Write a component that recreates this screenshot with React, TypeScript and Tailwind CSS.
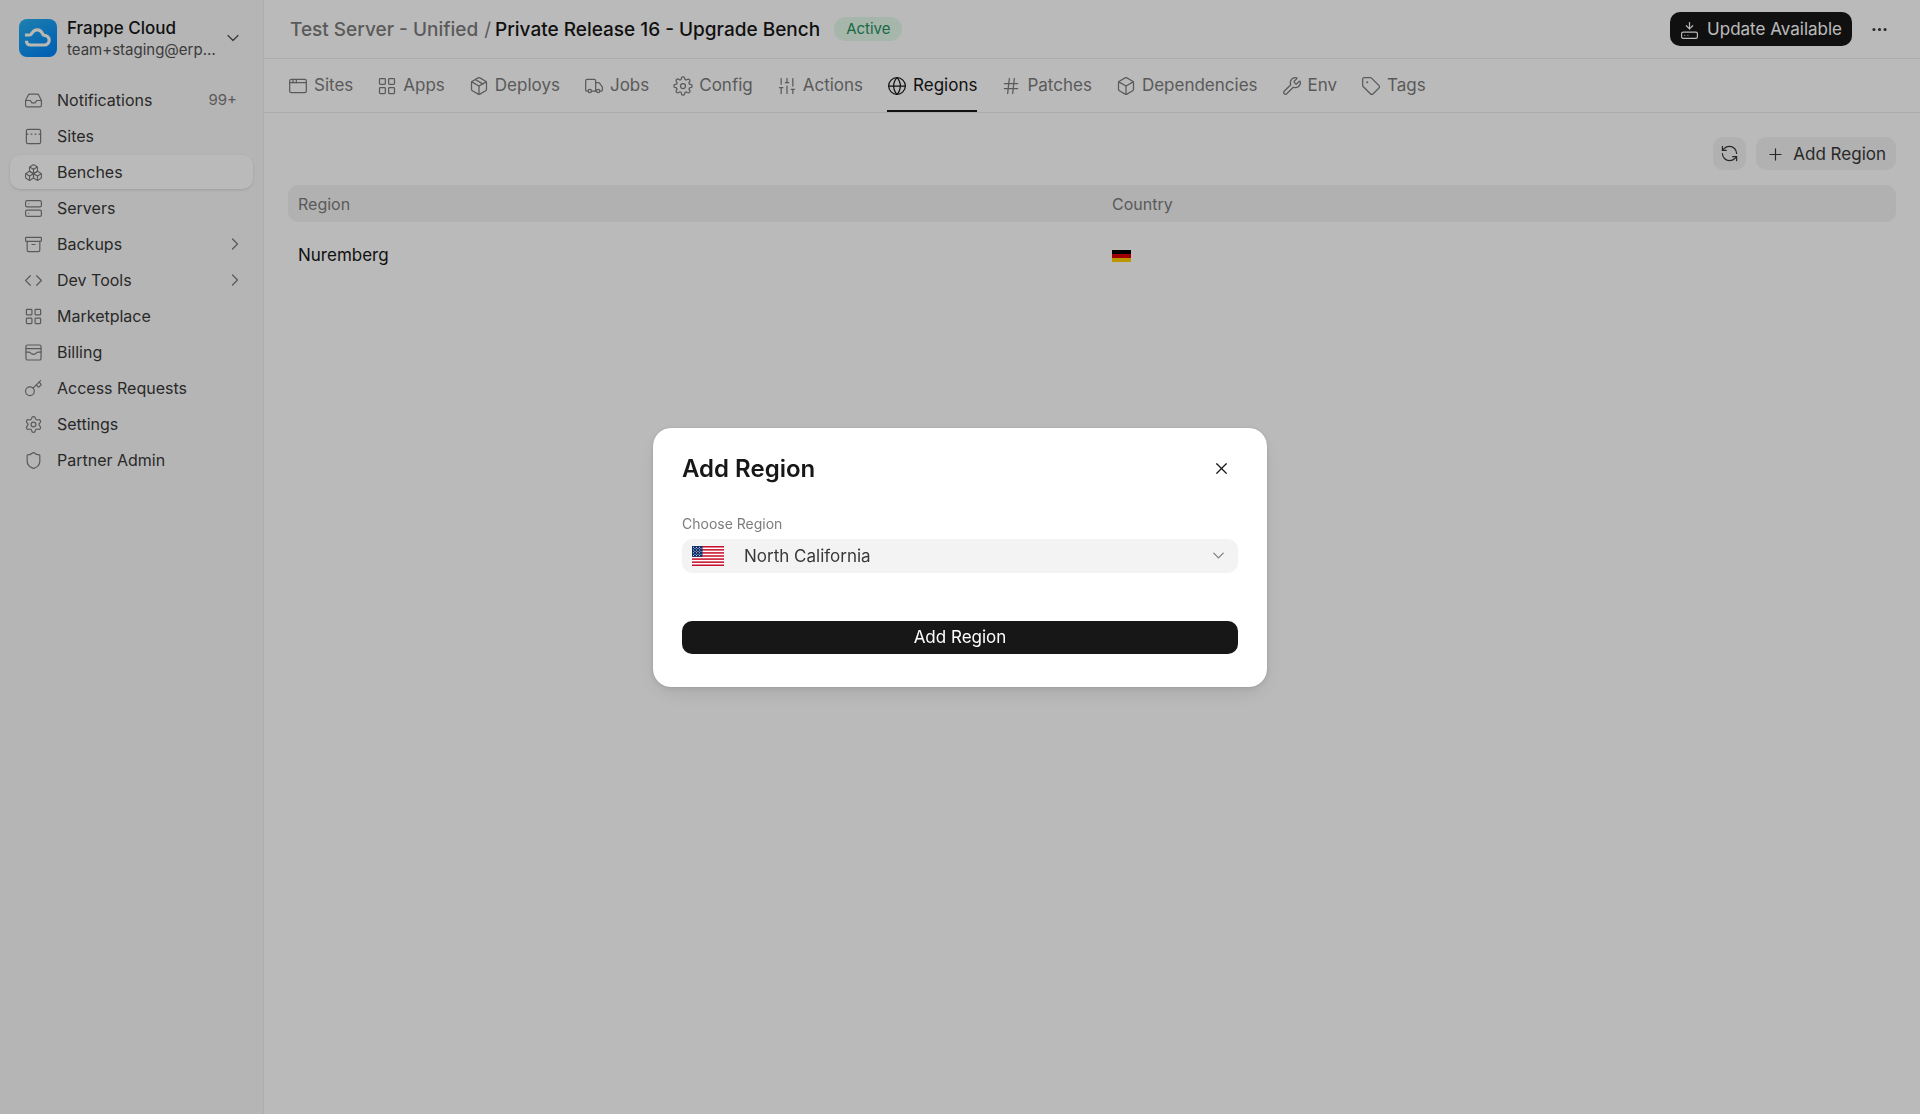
import { useState, type ComponentType } from "react";
import {
  AppWindow,
  Archive,
  Box,
  Boxes,
  ChevronDown,
  ChevronRight,
  Code,
  Ellipsis,
  Globe,
  HardDriveDownload,
  Hash,
  Inbox,
  Key,
  LayoutGrid,
  Package,
  PanelTopDashed,
  Plus,
  RefreshCcw,
  Server,
  Settings,
  Shield,
  SlidersVertical,
  Tag,
  Truck,
  Wrench,
  X,
} from "lucide-react";

interface IconProps {
  className?: string;
  strokeWidth?: number | string;
}

type Icon = ComponentType<IconProps>;

interface NavItem {
  label: string;
  icon: Icon;
  badge?: string;
  expandable?: boolean;
}

interface Tab {
  label: string;
  icon: Icon;
}

// wallet card with the flap across the middle
function BillingIcon({ className, strokeWidth }: IconProps) {
  return (
    <svg viewBox="0 0 24 24" className={className} fill="none" stroke="currentColor" strokeWidth={strokeWidth} strokeLinecap="round" strokeLinejoin="round">
      <rect width="19" height="19" x="2.5" y="2.5" rx="2" />
      <path d="M2.5 7h19" />
      <path d="M2.5 11.5H6c.9 0 1.7.4 2.3 1l.9.8c1.6 1.3 4 1.3 5.6 0l.9-.8c.6-.6 1.4-1 2.3-1h3.5" />
    </svg>
  );
}

// eight-lobed gear
function GearIcon({ className, strokeWidth }: IconProps) {
  return (
    <svg viewBox="0 0 24 24" className={className} fill="none" stroke="currentColor" strokeWidth={strokeWidth} strokeLinecap="round" strokeLinejoin="round">
      <circle cx="12" cy="12" r="3" />
      <path d="M19.4 15a1.65 1.65 0 0 0 .33 1.82l.06.06a2 2 0 1 1-2.83 2.83l-.06-.06a1.65 1.65 0 0 0-2.82 1.17V21a2 2 0 0 1-4 0v-.09a1.65 1.65 0 0 0-2.9-1.26l-.06.06a2 2 0 1 1-2.83-2.83l.06-.06A1.65 1.65 0 0 0 3.09 14H3a2 2 0 0 1 0-4h.09a1.65 1.65 0 0 0 1.26-2.9l-.06-.06a2 2 0 1 1 2.83-2.83l.06.06A1.65 1.65 0 0 0 10 3.09V3a2 2 0 0 1 4 0v.09a1.65 1.65 0 0 0 2.82 1.18l.06-.06a2 2 0 1 1 2.83 2.83l-.06.06A1.65 1.65 0 0 0 20.91 10H21a2 2 0 0 1 0 4h-.09a1.65 1.65 0 0 0-1.51 1z" />
    </svg>
  );
}

const navItems: NavItem[] = [
  { label: "Notifications", icon: Inbox, badge: "99+" },
  { label: "Sites", icon: PanelTopDashed },
  { label: "Benches", icon: Boxes },
  { label: "Servers", icon: Server },
  { label: "Backups", icon: Archive, expandable: true },
  { label: "Dev Tools", icon: Code, expandable: true },
  { label: "Marketplace", icon: LayoutGrid },
  { label: "Billing", icon: BillingIcon },
  { label: "Access Requests", icon: Key },
  { label: "Settings", icon: Settings },
  { label: "Partner Admin", icon: Shield },
];

const tabs: Tab[] = [
  { label: "Sites", icon: AppWindow },
  { label: "Apps", icon: LayoutGrid },
  { label: "Deploys", icon: Package },
  { label: "Jobs", icon: Truck },
  { label: "Config", icon: GearIcon },
  { label: "Actions", icon: SlidersVertical },
  { label: "Regions", icon: Globe },
  { label: "Patches", icon: Hash },
  { label: "Dependencies", icon: Box },
  { label: "Env", icon: Wrench },
  { label: "Tags", icon: Tag },
];

function CloudLogo() {
  return (
    <svg viewBox="0 0 38 38" className="size-[38px] shrink-0" fill="none">
      <defs>
        <linearGradient id="logo" x1="4" y1="0" x2="30" y2="38" gradientUnits="userSpaceOnUse">
          <stop stopColor="#28aef0" />
          <stop offset="1" stopColor="#0084f8" />
        </linearGradient>
      </defs>
      <rect width="38" height="38" rx="8" fill="url(#logo)" />
      <path
        d="M6 16h4.5c1.5 0 2-1 2.7-2.2 1.2-2 3-3 5-3 2.8 0 4.5 1.8 5.5 4.2.3.8.8 1.2 1.8 1.3 2.8.3 4.7 2.3 4.7 4.7 0 2.9-2.2 5-5 5H11.5c-2.3 0-4-1.6-4-4.2"
        stroke="#fffdf5"
        strokeWidth="3.2"
      />
    </svg>
  );
}

function GermanFlag() {
  return (
    <svg viewBox="0 0 19 12" className="h-3 w-[19px]" role="img" aria-label="Germany">
      <rect width="19" height="4" fill="#000" />
      <rect y="4" width="19" height="4" fill="#d00" />
      <rect y="8" width="19" height="4" fill="#ffce00" />
    </svg>
  );
}

function UsFlag({ className }: { className: string }) {
  return (
    <svg viewBox="0 0 32 20" className={className} aria-hidden="true">
      <rect width="32" height="20" fill="#fff" />
      {[0, 2, 4, 6, 8, 10, 12].map((i) => (
        <rect key={i} y={(i * 20) / 13} width="32" height={20 / 13} fill="#c8102e" />
      ))}
      <rect width="10.5" height="10.8" fill="#0a2f6b" />
      {[0, 1, 2, 3, 4, 5, 6].map((row) =>
        (row % 2 === 0 ? [1.5, 4.5, 7.5] : [3, 6, 9]).map((x) => (
          <circle key={`${row}-${x}`} cx={x} cy={1.2 + row * 1.4} r="0.5" fill="#fff" />
        )),
      )}
    </svg>
  );
}

function Sidebar() {
  return (
    <aside className="flex w-66 shrink-0 flex-col border-r border-[#ededed] bg-[#f8f8f8] px-2.5 pt-4">
      <button className="flex items-center gap-2.5 pr-2.5 pl-[9px] text-left">
        <CloudLogo />
        <span className="min-w-0 flex-1 whitespace-nowrap">
          <span className="block text-[17px] leading-6 font-medium text-[#171717]">Frappe Cloud</span>
          <span className="block text-[15px] leading-5 text-[#525252]">team+staging@erp…</span>
        </span>
        <ChevronDown className="-ml-2.5 size-5 shrink-0 text-[#525252]" strokeWidth={1.5} />
      </button>

      <nav className="mt-[23px] flex flex-col gap-0.5">
        {navItems.map((item) => {
          const isActive = item.label === "Benches";
          return (
            <a
              key={item.label}
              href="#"
              className={`flex h-[34px] items-center gap-3.5 rounded-[10px] px-3.5 text-base text-[#383838] ${isActive ? "bg-white shadow-sm" : ""}`}
            >
              <item.icon className="size-[19px] shrink-0 text-[#7c7c7c]" strokeWidth={1.5} />
              <span className="flex-1">{item.label}</span>
              {item.badge && <span className="pr-0.5 text-[15px] text-[#7c7c7c]">{item.badge}</span>}
              {item.expandable && <ChevronRight className="-mr-1.5 size-5 text-[#7c7c7c]" strokeWidth={1.5} />}
            </a>
          );
        })}
      </nav>
    </aside>
  );
}

function Header() {
  return (
    <header className="flex h-[59px] items-center border-b border-[#ededed] px-6">
      <div className="flex items-center pt-0.5 text-[19px] font-medium">
        <a href="#" className="px-0.5 text-[#7c7c7c]">Test Server - Unified</a>
        <span className="mr-0.5 ml-1 font-normal text-[#7c7c7c]">/</span>
        <a href="#" className="px-0.5 text-[#171717]">Private Release 16 - Upgrade Bench</a>
      </div>
      <span className="ml-3 flex h-6 items-center rounded-full bg-[#e4faeb] px-3 text-[15px] text-[#278f5e]">Active</span>
      <div className="ml-auto flex items-center gap-2.5">
        <button className="flex h-[34px] items-center gap-2 rounded-[10px] bg-[#171717] px-2.5 pt-0.5 text-[17px] text-white">
          <HardDriveDownload className="size-[19px]" strokeWidth={1.5} />
          Update Available
        </button>
        <button aria-label="More" className="flex size-[34px] items-center justify-center text-[#383838]">
          <Ellipsis className="size-[19px]" strokeWidth={2} />
        </button>
      </div>
    </header>
  );
}

function TabBar({ active }: { active: string }) {
  return (
    <nav className="flex h-[54px] items-stretch gap-6 border-b border-[#ededed] px-6">
      {tabs.map((tab) => (
        <a
          key={tab.label}
          href="#"
          className={`flex items-center gap-1.5 border-b-2 pt-0.5 text-[17px] ${tab.label === active ? "border-[#171717] text-[#171717]" : "border-transparent text-[#7c7c7c]"}`}
        >
          <tab.icon className="size-5" strokeWidth={1.5} />
          {tab.label}
        </a>
      ))}
    </nav>
  );
}

function RegionList() {
  return (
    <section className="px-6 pt-6">
      <div className="flex justify-end gap-2.5">
        <button aria-label="Refresh" className="flex size-[33px] items-center justify-center rounded-[10px] bg-[#f3f3f3] text-[#383838]">
          <RefreshCcw className="size-[19px]" strokeWidth={1.5} />
        </button>
        <button className="flex h-[33px] items-center gap-2 rounded-[10px] bg-[#f3f3f3] px-2.5 pt-0.5 text-[17px] text-[#383838]">
          <Plus className="size-[19px]" strokeWidth={1.5} />
          Add Region
        </button>
      </div>

      <table className="mt-[15px] w-full table-fixed text-left">
        <thead>
          <tr className="h-[37px] text-base text-[#7c7c7c]">
            <th className="w-1/2 rounded-l-[10px] bg-[#f3f3f3] px-2.5 font-normal">Region</th>
            <th className="rounded-r-[10px] bg-[#f3f3f3] pl-5 font-normal">Country</th>
          </tr>
        </thead>
        <tbody>
          <tr className="h-[67px] text-[17px] text-[#171717]">
            <td className="px-2.5">Nuremberg</td>
            <td className="pl-5">
              <GermanFlag />
            </td>
          </tr>
        </tbody>
      </table>
    </section>
  );
}

function AddRegionDialog() {
  const [region, setRegion] = useState("North California");

  return (
    <div className="fixed inset-0 flex items-center justify-center bg-black/27">
      <div
        role="dialog"
        aria-labelledby="dialog-title"
        className="w-[614px] rounded-[18px] bg-white px-[29px] pt-6 pb-[33px] shadow-[0_0_1px_rgba(0,0,0,0.35),0_2px_6px_rgba(0,0,0,0.08),0_8px_24px_-4px_rgba(0,0,0,0.1)]"
      >
        <div className="flex items-center justify-between">
          <h3 id="dialog-title" className="text-2xl leading-8 font-semibold text-[#171717]">Add Region</h3>
          <button aria-label="Close" className="flex size-[34px] items-center justify-center text-[#171717]">
            <X className="size-[19px]" strokeWidth={1.5} />
          </button>
        </div>

        <label htmlFor="region" className="mt-7 block text-sm leading-5 text-[#7c7c7c]">Choose Region</label>
        <div className="relative mt-[5px]">
          <select
            id="region"
            value={region}
            onChange={(e) => setRegion(e.target.value)}
            className="block h-[34px] w-full appearance-none rounded-[10px] bg-[#f3f3f3] pt-0.5 pr-10 pl-[62px] text-[17px] text-[#383838]"
          >
            <option>North California</option>
          </select>
          <UsFlag className="pointer-events-none absolute top-[7px] left-2.5 h-5 w-8" />
          <ChevronDown className="pointer-events-none absolute top-[7px] right-2.5 size-[19px] text-[#7c7c7c]" strokeWidth={1.5} />
        </div>

        <button className="mt-12 h-[33px] w-full rounded-[10px] bg-[#171717] pt-0.5 text-[17px] text-white">Add Region</button>
      </div>
    </div>
  );
}

export default function App() {
  return (
    <div className="flex min-h-screen bg-white font-['Inter',sans-serif]">
      <Sidebar />
      <main className="min-w-0 flex-1">
        <Header />
        <TabBar active="Regions" />
        <RegionList />
      </main>
      <AddRegionDialog />
    </div>
  );
}
